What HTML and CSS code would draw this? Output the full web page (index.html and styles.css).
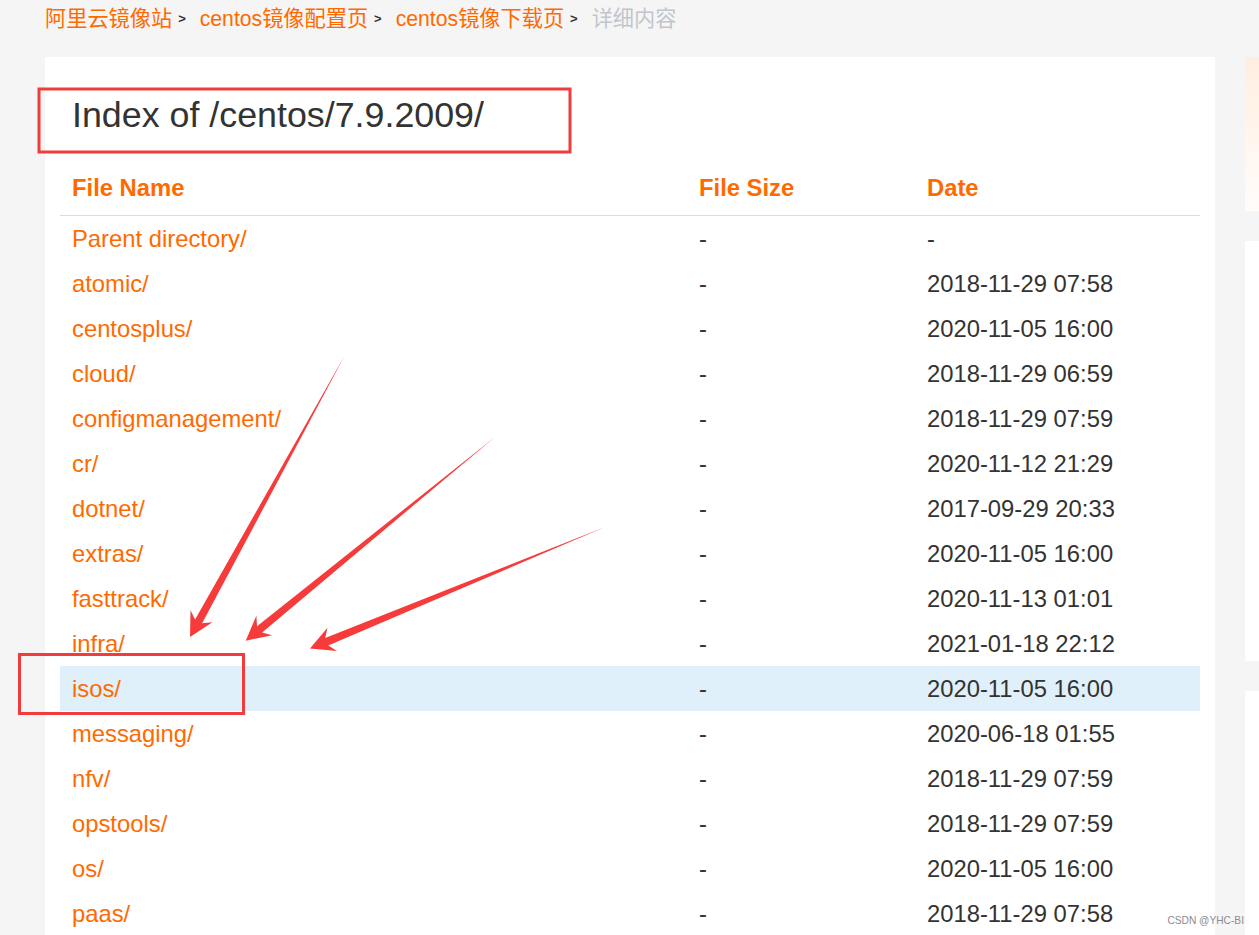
FILE: index.html
```html
<!DOCTYPE html>
<html lang="zh-CN">
<head>
<meta charset="utf-8">
<title>Index of /centos/7.9.2009/</title>
<link rel="stylesheet" href="styles.css">
</head>
<body>
<div class="page">
  <nav class="crumbs">
    <a href="#">阿里云镜像站</a><span class="sep">&gt;</span>
    <a href="#">centos镜像配置页</a><span class="sep">&gt;</span>
    <a href="#">centos镜像下载页</a><span class="sep">&gt;</span>
    <span class="current">详细内容</span>
  </nav>
  <div class="layout">
    <main class="card">
      <h2 class="title">Index of /centos/7.9.2009/</h2>
      <table class="listing">
        <colgroup><col class="c-name"><col class="c-size"><col class="c-date"></colgroup>
        <thead>
          <tr><th>File Name</th><th>File Size</th><th>Date</th></tr>
        </thead>
        <tbody>
          <tr><td><a href="#">Parent directory/</a></td><td>-</td><td>-</td></tr>
          <tr><td><a href="#">atomic/</a></td><td>-</td><td>2018-11-29 07:58</td></tr>
          <tr><td><a href="#">centosplus/</a></td><td>-</td><td>2020-11-05 16:00</td></tr>
          <tr><td><a href="#">cloud/</a></td><td>-</td><td>2018-11-29 06:59</td></tr>
          <tr><td><a href="#">configmanagement/</a></td><td>-</td><td>2018-11-29 07:59</td></tr>
          <tr><td><a href="#">cr/</a></td><td>-</td><td>2020-11-12 21:29</td></tr>
          <tr><td><a href="#">dotnet/</a></td><td>-</td><td>2017-09-29 20:33</td></tr>
          <tr><td><a href="#">extras/</a></td><td>-</td><td>2020-11-05 16:00</td></tr>
          <tr><td><a href="#">fasttrack/</a></td><td>-</td><td>2020-11-13 01:01</td></tr>
          <tr><td><a href="#">infra/</a></td><td>-</td><td>2021-01-18 22:12</td></tr>
          <tr class="hl"><td><a href="#">isos/</a></td><td>-</td><td>2020-11-05 16:00</td></tr>
          <tr><td><a href="#">messaging/</a></td><td>-</td><td>2020-06-18 01:55</td></tr>
          <tr><td><a href="#">nfv/</a></td><td>-</td><td>2018-11-29 07:59</td></tr>
          <tr><td><a href="#">opstools/</a></td><td>-</td><td>2018-11-29 07:59</td></tr>
          <tr><td><a href="#">os/</a></td><td>-</td><td>2020-11-05 16:00</td></tr>
          <tr><td><a href="#">paas/</a></td><td>-</td><td>2018-11-29 07:58</td></tr>
        </tbody>
      </table>
    </main>
    <aside class="side">
      <div class="promo"></div>
      <div class="box box-a"></div>
      <div class="box box-b"></div>
    </aside>
  </div>

  <svg class="annot" width="1259" height="935" viewBox="0 0 1259 935" aria-hidden="true">
    <rect x="39" y="89" width="531" height="63" fill="none" stroke="#f23c3c" stroke-width="3"/>
    <rect x="19.5" y="654.5" width="224" height="59" fill="none" stroke="#f23c3c" stroke-width="3"/>
    <g fill="#f73b3b">
      <path transform="translate(345 355) rotate(118.79)" d="M0 0 L304 -4 L298 -12.5 L321.8 0 L298 12.5 L304 4 Z"/>
      <path transform="translate(495 437) rotate(140.75)" d="M0 0 L304 -4 L298 -12.5 L321.9 0 L298 12.5 L304 4 Z"/>
      <path transform="translate(605 527) rotate(157.6)" d="M0 0 L301 -4 L295 -12.5 L319.1 0 L295 12.5 L301 4 Z"/>
    </g>
  </svg>
  <div class="watermark">CSDN @YHC-BI</div>
</div>
</body>
</html>
```
FILE: styles.css
```css
html, body {
  margin: 0;
  padding: 0;
}
body {
  background: #f5f5f5;
  font-family: "Liberation Sans", Arial, "Noto Sans CJK SC", sans-serif;
  color: #333;
  width: 1259px;
  height: 935px;
  overflow: hidden;
}
.page {
  position: relative;
  width: 1259px;
  height: 935px;
  overflow: hidden;
}
a {
  color: #ff6a00;
  text-decoration: none;
}

/* breadcrumb */
.crumbs {
  display: flex;
  align-items: center;
  margin-top: 4px;
  padding-left: 45px;
  height: 30px;
  line-height: 30px;
  font-size: 21.2px;
  font-family: "Liberation Sans", Arial, "Noto Sans CJK SC", sans-serif;
  white-space: nowrap;
}
.crumbs .sep {
  color: #333;
  font-size: 13px;
  font-weight: bold;
  margin: 0 14px 0 6px;
}
.crumbs .current {
  color: #c0c6cc;
}

/* layout */
.layout {
  display: flex;
  gap: 30px;
  margin-top: 23px;
  margin-left: 45px;
}
.card {
  flex: none;
  width: 1140px;
  padding: 0 15px;
  background: #fff;
  min-height: 1000px;
}
.side {
  flex: 1;
  min-width: 0;
  display: flex;
  flex-direction: column;
  gap: 30px;
}
.promo {
  height: 154px;
  background: linear-gradient(180deg, #ffeee0 0%, #fff8f2 70%, #fffcfa 100%);
}
.box {
  background: #fff;
}
.box-a { height: 420px; }
.box-b { height: 400px; }

/* title */
.title {
  margin: 38px 0 30px 12px;
  font-size: 35.8px;
  line-height: 40px;
  font-weight: normal;
  color: #333;
}

/* listing */
.listing {
  width: 1140px;
  border-collapse: collapse;
  table-layout: fixed;
  font-size: 23.8px;
}
.c-name { width: 627px; }
.c-size { width: 228px; }
.c-date { width: 285px; }
.listing th {
  text-align: left;
  font-weight: bold;
  color: #ff6a00;
  padding: 0 12px 5px;
  line-height: 45px;
  border-bottom: 1px solid #ddd;
}
.listing td {
  padding: 1px 12px 0;
  height: 44px;
  line-height: 44px;
  color: #333;
  white-space: nowrap;
}
.listing tr.hl td {
  background: #dff0fa;
}

/* overlays */
.annot {
  position: absolute;
  left: 0;
  top: 0;
  pointer-events: none;
}
.watermark {
  position: absolute;
  right: 15px;
  bottom: 9px;
  font-size: 10.2px;
  color: #8c8c8c;
}
```
